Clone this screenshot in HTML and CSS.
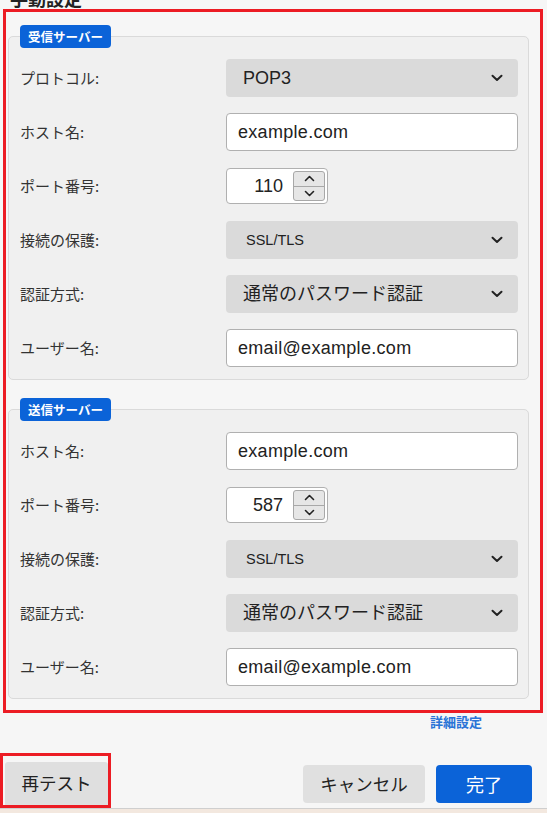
FILE: index.html
```html
<!DOCTYPE html>
<html lang="ja">
<head>
<meta charset="utf-8">
<title>手動設定</title>
<link rel="stylesheet" href="styles.css">
</head>
<body>
<h1 class="title">手動設定</h1>
<div class="highlight main-box">
  <fieldset class="group first">
    <legend class="badge">受信サーバー</legend>
    <div class="row">
      <label class="label">プロトコル:</label>
      <div class="select"><span class="val">POP3</span><svg class="chev" width="12" height="8" viewBox="0 0 12 8"><path d="M1.5 1.8 L6 6 L10.5 1.8" fill="none" stroke="#222" stroke-width="2" stroke-linecap="round" stroke-linejoin="round"/></svg></div>
    </div>
    <div class="row">
      <label class="label">ホスト名:</label>
      <div class="input"><span class="val">example.com</span></div>
    </div>
    <div class="row">
      <label class="label">ポート番号:</label>
      <div class="port">
        <span class="port-val">110</span>
        <div class="spinner">
          <div class="spin-half"><svg width="11" height="7" viewBox="0 0 11 7"><path d="M1.5 5.5 L5.5 1.5 L9.5 5.5" fill="none" stroke="#222" stroke-width="1.6" stroke-linecap="round" stroke-linejoin="round"/></svg></div>
          <div class="spin-half lower"><svg width="11" height="7" viewBox="0 0 11 7"><path d="M1.5 1.5 L5.5 5.5 L9.5 1.5" fill="none" stroke="#222" stroke-width="1.6" stroke-linecap="round" stroke-linejoin="round"/></svg></div>
        </div>
      </div>
    </div>
    <div class="row">
      <label class="label">接続の保護:</label>
      <div class="select"><span class="val small">SSL/TLS</span><svg class="chev" width="12" height="8" viewBox="0 0 12 8"><path d="M1.5 1.8 L6 6 L10.5 1.8" fill="none" stroke="#222" stroke-width="2" stroke-linecap="round" stroke-linejoin="round"/></svg></div>
    </div>
    <div class="row">
      <label class="label">認証方式:</label>
      <div class="select"><span class="val">通常のパスワード認証</span><svg class="chev" width="12" height="8" viewBox="0 0 12 8"><path d="M1.5 1.8 L6 6 L10.5 1.8" fill="none" stroke="#222" stroke-width="2" stroke-linecap="round" stroke-linejoin="round"/></svg></div>
    </div>
    <div class="row">
      <label class="label">ユーザー名:</label>
      <div class="input"><span class="val">email@example.com</span></div>
    </div>
  </fieldset>

  <fieldset class="group second">
    <legend class="badge">送信サーバー</legend>
    <div class="row">
      <label class="label">ホスト名:</label>
      <div class="input"><span class="val">example.com</span></div>
    </div>
    <div class="row">
      <label class="label">ポート番号:</label>
      <div class="port">
        <span class="port-val">587</span>
        <div class="spinner">
          <div class="spin-half"><svg width="11" height="7" viewBox="0 0 11 7"><path d="M1.5 5.5 L5.5 1.5 L9.5 5.5" fill="none" stroke="#222" stroke-width="1.6" stroke-linecap="round" stroke-linejoin="round"/></svg></div>
          <div class="spin-half lower"><svg width="11" height="7" viewBox="0 0 11 7"><path d="M1.5 1.5 L5.5 5.5 L9.5 1.5" fill="none" stroke="#222" stroke-width="1.6" stroke-linecap="round" stroke-linejoin="round"/></svg></div>
        </div>
      </div>
    </div>
    <div class="row">
      <label class="label">接続の保護:</label>
      <div class="select"><span class="val small">SSL/TLS</span><svg class="chev" width="12" height="8" viewBox="0 0 12 8"><path d="M1.5 1.8 L6 6 L10.5 1.8" fill="none" stroke="#222" stroke-width="2" stroke-linecap="round" stroke-linejoin="round"/></svg></div>
    </div>
    <div class="row">
      <label class="label">認証方式:</label>
      <div class="select"><span class="val">通常のパスワード認証</span><svg class="chev" width="12" height="8" viewBox="0 0 12 8"><path d="M1.5 1.8 L6 6 L10.5 1.8" fill="none" stroke="#222" stroke-width="2" stroke-linecap="round" stroke-linejoin="round"/></svg></div>
    </div>
    <div class="row">
      <label class="label">ユーザー名:</label>
      <div class="input"><span class="val">email@example.com</span></div>
    </div>
  </fieldset>
</div>

<div class="link-row"><a class="adv-link">詳細設定</a></div>

<div class="actions">
  <div class="highlight retest-box"><button class="btn retest">再テスト</button></div>
  <div class="right-buttons">
    <button class="btn cancel">キャンセル</button>
    <button class="btn primary">完了</button>
  </div>
</div>
<div class="bottom-edge"></div>
</body>
</html>
```

FILE: styles.css
```css
* { box-sizing: border-box; }

html, body {
  margin: 0;
  padding: 0;
  background: #f6f6f6;
  overflow: hidden;
}

body {
  font-family: "Liberation Sans", "Noto Sans CJK JP", sans-serif;
  color: #222;
  width: 547px;
  height: 813px;
}

.title {
  margin: -13px 0 0 0;
  padding-left: 10px;
  font-size: 18px;
  line-height: 22px;
  font-weight: bold;
  color: #222;
  font-family: "Noto Sans CJK JP", sans-serif;
}

.highlight {
  border: 3px solid #ec1c24;
}

.main-box {
  margin: 0 4px 0 3px;
  padding: 0 11px 11px 2px;
}

.group {
  margin: 13px 0 0 0;
  padding: 11px 10px 12px 11px;
  border: 1px solid #dadada;
  border-radius: 5px;
  background: #f0f0f0;
  min-width: 0;
  display: flex;
  flex-direction: column;
  gap: 16px;
}

.group.second {
  margin-top: 18px;
}

.badge {
  background: #0b63d8;
  color: #fff;
  font-family: "Noto Sans CJK JP", sans-serif;
  font-weight: bold;
  font-size: 12.5px;
  line-height: 23px;
  height: 23px;
  padding: 0 8px;
  border-radius: 4px;
  margin: 0;
}

.row {
  display: grid;
  grid-template-columns: 206px 1fr;
  align-items: center;
  height: 38px;
}

.label {
  font-family: "Noto Sans CJK JP", sans-serif;
  font-size: 15px;
  line-height: 20px;
  color: #333;
}

.select {
  height: 38px;
  background: #dadada;
  border-radius: 4px;
  display: flex;
  align-items: center;
  justify-content: space-between;
  padding: 0 15px 0 17px;
}

.val {
  font-size: 18px;
  line-height: 22px;
  color: #222;
  font-family: "Liberation Sans", "Noto Sans CJK JP", sans-serif;
}

.val.small {
  font-size: 14.5px;
  padding-left: 3px;
}

.input {
  height: 38px;
  background: #fff;
  border: 1px solid #b0b0b0;
  border-radius: 4px;
  display: flex;
  align-items: center;
  padding: 0 11px;
}

.input .val {
  letter-spacing: 0.3px;
}

.port {
  width: 102px;
  height: 36px;
  background: #fff;
  border: 1px solid #b0b0b0;
  border-radius: 4px;
  display: flex;
  align-items: center;
  padding-right: 2px;
}

.port-val {
  flex: 1;
  text-align: right;
  padding-right: 10px;
  font-size: 18px;
  line-height: 22px;
  color: #222;
}

.spinner {
  width: 32px;
  height: 30px;
  border: 1px solid #a8a8a8;
  border-radius: 3px;
  background: #e6e6e6;
  display: flex;
  flex-direction: column;
}

.spin-half {
  flex: 1;
  display: flex;
  align-items: center;
  justify-content: center;
}

.spin-half.lower {
  border-top: 1px solid #a8a8a8;
}

.link-row {
  margin-top: 1px;
  text-align: right;
  padding-right: 65px;
  line-height: 15px;
}

.adv-link {
  font-family: "Noto Sans CJK JP", sans-serif;
  font-size: 13px;
  font-weight: bold;
  color: #2a74d6;
}

.actions {
  margin-top: 24px;
  display: flex;
  align-items: flex-start;
  padding-right: 15px;
}

.retest-box {
  padding: 6px 0 0 2px;
  width: 111px;
  height: 55px;
  overflow: hidden;
}

.btn {
  border: none;
  font-family: "Noto Sans CJK JP", sans-serif;
  font-size: 17.5px;
  line-height: 22px;
  border-radius: 4px;
  padding: 0;
  cursor: default;
}

.retest {
  width: 103px;
  height: 44px;
  background: #dfdfdf;
  color: #222;
  border-radius: 3px 3px 0 0;
  padding-bottom: 2px;
}

.right-buttons {
  margin-left: auto;
  margin-top: 12px;
  display: flex;
  gap: 11px;
}

.cancel {
  width: 122px;
  height: 38px;
  background: #e0e0e0;
  color: #222;
}

.primary {
  width: 96px;
  height: 38px;
  background: #0b63d8;
  color: #fff;
  font-size: 18px;
}

.bottom-edge {
  height: 6px;
  border-top: 1px solid #cfcfcf;
  background: #f3e8df;
}
```
